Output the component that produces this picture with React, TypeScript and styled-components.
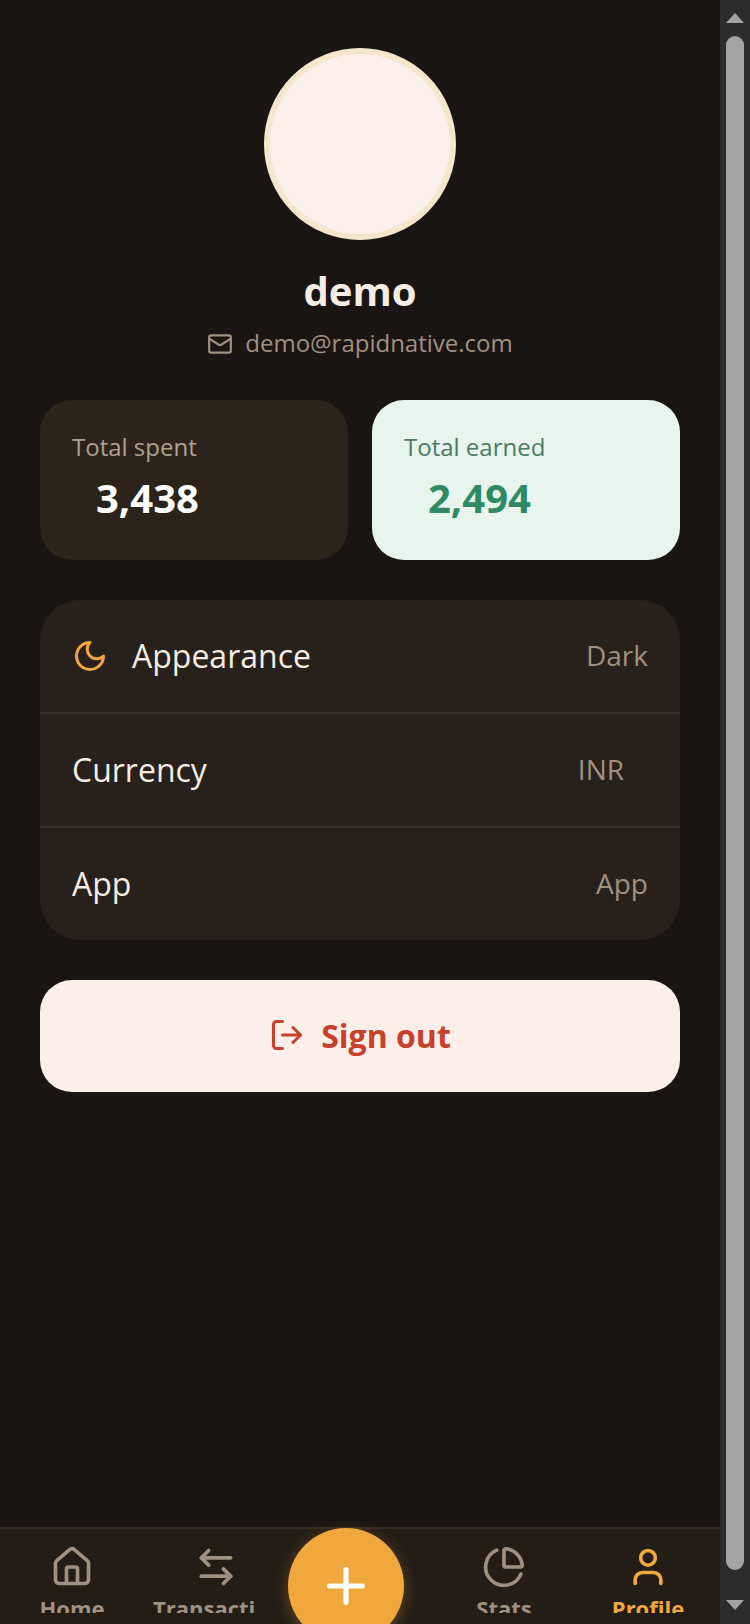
import React from "react";
import styled, { createGlobalStyle } from "styled-components";
import { Mail, LogOut, House, ArrowLeftRight, ChartPie, User, Plus } from "lucide-react";

const Global = createGlobalStyle`
  html, body { margin: 0; padding: 0; height: 100%; overflow: hidden; background: #1a1512; }
  * { box-sizing: border-box; }
`;

const Page = styled.div`
  width: 750px;
  height: 1624px;
  display: flex;
  font-family: "Open Sans", "Noto Sans", sans-serif;
  background: #1a1512;
`;
const Main = styled.div`
  position: relative;
  width: 720px;
  height: 1624px;
  display: flex;
  flex-direction: column;
  overflow: hidden;
`;
const Content = styled.div`
  flex: 1;
  padding: 48px 40px 0;
  display: flex;
  flex-direction: column;
`;
const Header = styled.div`
  display: flex;
  flex-direction: column;
  align-items: center;
`;
const Avatar = styled.div`
  width: 192px;
  height: 192px;
  border-radius: 50%;
  background: #fcf0ea;
  border: 6px solid #f5e6cc;
`;
const Name = styled.div`
  margin-top: 23px;
  font-size: 40px;
  line-height: 56px;
  font-weight: 700;
  color: #f5ede4;
`;
const EmailRow = styled.div`
  margin-top: 6px;
  display: flex;
  align-items: center;
  gap: 12px;
  font-size: 24px;
  line-height: 36px;
  color: #a09080;
`;
const MailIcon = styled(Mail)`
  margin-top: 2px;
`;
const Stats = styled.div`
  margin-top: 39px;
  display: flex;
  gap: 24px;
`;
const StatCard = styled.div<{ $light?: boolean }>`
  flex: 1;
  height: 160px;
  border-radius: 32px;
  padding: 31px 32px;
  background: ${(p) => (p.$light ? "#e8f4ee" : "#2c241b")};
`;
const StatLabel = styled.div<{ $light?: boolean }>`
  font-size: 24px;
  line-height: 32px;
  color: ${(p) => (p.$light ? "#4a7c64" : "#b0a090")};
`;
const StatValue = styled.div<{ $light?: boolean }>`
  margin-top: 9px;
  padding-left: 24px;
  font-size: 40px;
  line-height: 52px;
  font-weight: 700;
  color: ${(p) => (p.$light ? "#2d8a63" : "#ffffff")};
`;
const Settings = styled.div`
  margin-top: 40px;
  border-radius: 40px;
  background: #28201a;
  overflow: hidden;
`;
const Row = styled.div<{ $border?: boolean }>`
  height: ${(p) => (p.$border ? 114 : 112)}px;
  padding: 0 32px 2px;
  display: flex;
  align-items: center;
  justify-content: space-between;
  border-bottom: ${(p) => (p.$border ? "2px solid #3a322a" : "none")};
`;
const RowLeft = styled.div`
  display: flex;
  align-items: center;
  gap: 24px;
  font-size: 32px;
  color: #f5ede4;
`;
const MoonIcon = styled.svg`
  width: 36px;
  height: 36px;
  margin-top: 2px;
  fill: none;
  stroke: #f0a83c;
  stroke-width: 2;
  stroke-linecap: round;
  stroke-linejoin: round;
`;
const RowValue = styled.div<{ $inset?: boolean }>`
  font-size: 28px;
  color: #a09080;
  margin-right: ${(p) => (p.$inset ? 24 : 0)}px;
`;
const SignOut = styled.div`
  margin-top: 40px;
  height: 112px;
  padding-bottom: 2px;
  border-radius: 32px;
  background: #fceee8;
  display: flex;
  align-items: center;
  justify-content: center;
  gap: 16px;
  font-size: 32px;
  font-weight: 700;
  color: #c8402a;
`;
const TabBar = styled.div`
  height: 97px;
  flex: none;
  background: #231d16;
  border-top: 2px solid #352b21;
  display: grid;
  grid-template-columns: repeat(5, 144px);
  overflow: hidden;
`;
const Tab = styled.div<{ $active?: boolean }>`
  display: flex;
  flex-direction: column;
  align-items: center;
  padding-top: 16px;
  color: ${(p) => (p.$active ? "#f0a83c" : "#a09080")};
`;
const TabLabel = styled.div<{ $shift?: number }>`
  width: 103px;
  height: 20px;
  margin-top: 4px;
  margin-right: ${(p) => p.$shift ?? 0}px;
  overflow: hidden;
  text-align: center;
  white-space: nowrap;
  font-size: 22px;
  line-height: 30px;
  font-weight: 700;
`;
const Fab = styled.div`
  position: absolute;
  left: 288px;
  top: 1528px;
  width: 116px;
  height: 116px;
  border-radius: 50%;
  background: #f0a83c;
  box-shadow: 0 4px 16px rgba(240, 168, 60, 0.3);
  display: flex;
  align-items: center;
  justify-content: center;
  color: #ffffff;
`;
const Scrollbar = styled.div`
  width: 30px;
  height: 1624px;
  background: #2c2c2c;
  display: flex;
  flex-direction: column;
  align-items: center;
`;
const Arrow = styled.svg<{ $top?: number }>`
  width: 18px;
  height: 10px;
  margin-top: ${(p) => p.$top ?? 0}px;
  flex: none;
  fill: #a3a3a3;
`;
const Thumb = styled.div`
  width: 18px;
  height: 1534px;
  margin: 13px 0 30px;
  border-radius: 9px;
  background: #a3a3a3;
  flex: none;
`;

export default function App() {
  return (
    <Page>
      <Global />
      <Main>
        <Content>
          <Header>
            <Avatar />
            <Name>demo</Name>
            <EmailRow>
              <MailIcon size={26} strokeWidth={2} />
              demo@rapidnative.com
            </EmailRow>
          </Header>
          <Stats>
            <StatCard>
              <StatLabel>Total spent</StatLabel>
              <StatValue>3,438</StatValue>
            </StatCard>
            <StatCard $light>
              <StatLabel $light>Total earned</StatLabel>
              <StatValue $light>2,494</StatValue>
            </StatCard>
          </Stats>
          <Settings>
            <Row $border>
              <RowLeft>
                <MoonIcon viewBox="0 0 24 24">
                  <path d="M12 3a6 6 0 0 0 9 9 9 9 0 1 1-9-9Z" />
                </MoonIcon>
                Appearance
              </RowLeft>
              <RowValue>Dark</RowValue>
            </Row>
            <Row $border>
              <RowLeft>Currency</RowLeft>
              <RowValue $inset>INR</RowValue>
            </Row>
            <Row>
              <RowLeft>App</RowLeft>
              <RowValue>App</RowValue>
            </Row>
          </Settings>
          <SignOut>
            <LogOut size={36} strokeWidth={2} />
            Sign out
          </SignOut>
        </Content>
        <TabBar>
          <Tab>
            <House size={44} strokeWidth={2} />
            <TabLabel>Home</TabLabel>
          </Tab>
          <Tab>
            <ArrowLeftRight size={44} strokeWidth={2} />
            <TabLabel $shift={23}>Transactions</TabLabel>
          </Tab>
          <Tab />
          <Tab>
            <ChartPie size={44} strokeWidth={2} />
            <TabLabel>Stats</TabLabel>
          </Tab>
          <Tab $active>
            <User size={44} strokeWidth={2} />
            <TabLabel>Profile</TabLabel>
          </Tab>
        </TabBar>
        <Fab>
          <Plus size={56} strokeWidth={2.2} />
        </Fab>
      </Main>
      <Scrollbar>
        <Arrow viewBox="0 0 18 10" $top={13}>
          <polygon points="9,0 18,10 0,10" />
        </Arrow>
        <Thumb />
        <Arrow viewBox="0 0 18 10">
          <polygon points="0,0 18,0 9,10" />
        </Arrow>
      </Scrollbar>
    </Page>
  );
}
